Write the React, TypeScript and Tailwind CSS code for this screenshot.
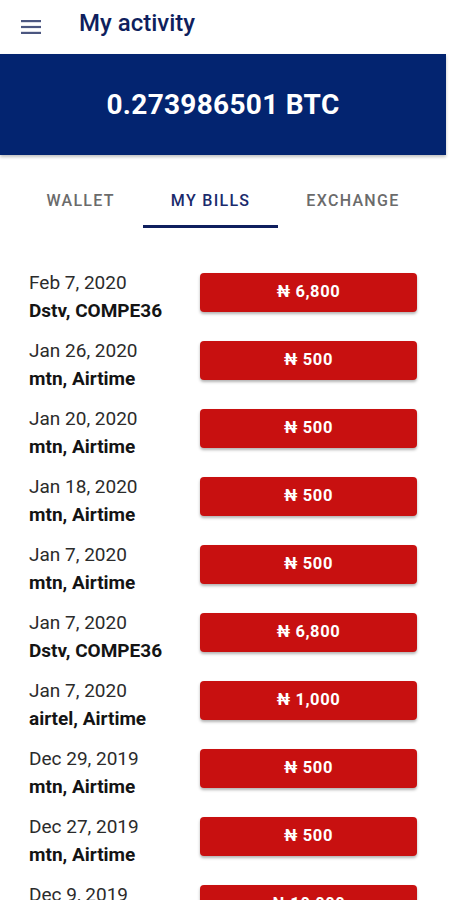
const bills = [
  { date: 'Feb 7, 2020', name: 'Dstv, COMPE36', amount: '6,800' },
  { date: 'Jan 26, 2020', name: 'mtn, Airtime', amount: '500' },
  { date: 'Jan 20, 2020', name: 'mtn, Airtime', amount: '500' },
  { date: 'Jan 18, 2020', name: 'mtn, Airtime', amount: '500' },
  { date: 'Jan 7, 2020', name: 'mtn, Airtime', amount: '500' },
  { date: 'Jan 7, 2020', name: 'Dstv, COMPE36', amount: '6,800' },
  { date: 'Jan 7, 2020', name: 'airtel, Airtime', amount: '1,000' },
  { date: 'Dec 29, 2019', name: 'mtn, Airtime', amount: '500' },
  { date: 'Dec 27, 2019', name: 'mtn, Airtime', amount: '500' },
  { date: 'Dec 9, 2019', name: 'mtn, Airtime', amount: '10,000' },
];

const tabs = ['Wallet', 'My bills', 'Exchange'];

export default function App() {
  return (
    <div className="w-[450px] h-[900px] overflow-hidden bg-white font-['Roboto',sans-serif]">
      <header className="h-[54px] flex items-center">
        <svg className="ml-[21px] w-[20px] h-[14px]" viewBox="0 0 20 14">
          <rect y="0" width="20" height="2.2" fill="#4b5680" />
          <rect y="5.9" width="20" height="2.2" fill="#4b5680" />
          <rect y="11.8" width="20" height="2.2" fill="#4b5680" />
        </svg>
        <h1 className="ml-[38px] text-[24px] font-medium text-[#0f1f5e] -mt-[8px]">My activity</h1>
      </header>

      <div className="w-[446px] h-[101px] bg-[#032470] flex items-center justify-center shadow-[0_2px_3px_rgba(0,0,0,0.25)]">
        <span className="text-white text-[28px] font-bold tracking-[0.3px]">0.273986501 BTC</span>
      </div>

      <nav className="w-[446px] flex justify-center pt-[31px]">
        {tabs.map((t, i) => (
          <div
            key={t}
            className={`px-[28px] flex flex-col items-center ${i === 1 ? 'border-b-[3px] border-[#0f1f5e]' : 'border-b-[3px] border-transparent'}`}
          >
            <span
              className={`uppercase text-[16px] font-medium tracking-[1.3px] leading-[30px] pb-[9px] ${i === 1 ? 'text-[#1a2a6c]' : 'text-[#6b6b6b]'}`}
            >
              {t}
            </span>
          </div>
        ))}
      </nav>

      <ul className="pt-[41px]">
        {bills.map((b, i) => (
          <li key={i} className="h-[68px] flex items-start pl-[29px]">
            <div className="w-[171px] leading-[28px] text-[19px]">
              <p className="text-[#2b2b2b]">{b.date}</p>
              <p className="font-bold text-[#141414]">{b.name}</p>
            </div>
            <button className="mt-[4px] w-[217px] h-[39px] rounded-[4px] bg-[#c81010] text-white font-bold text-[16.5px] tracking-[0.6px] shadow-[0_2px_3px_rgba(0,0,0,0.3)]">
              ₦ {b.amount}
            </button>
          </li>
        ))}
      </ul>
    </div>
  );
}
